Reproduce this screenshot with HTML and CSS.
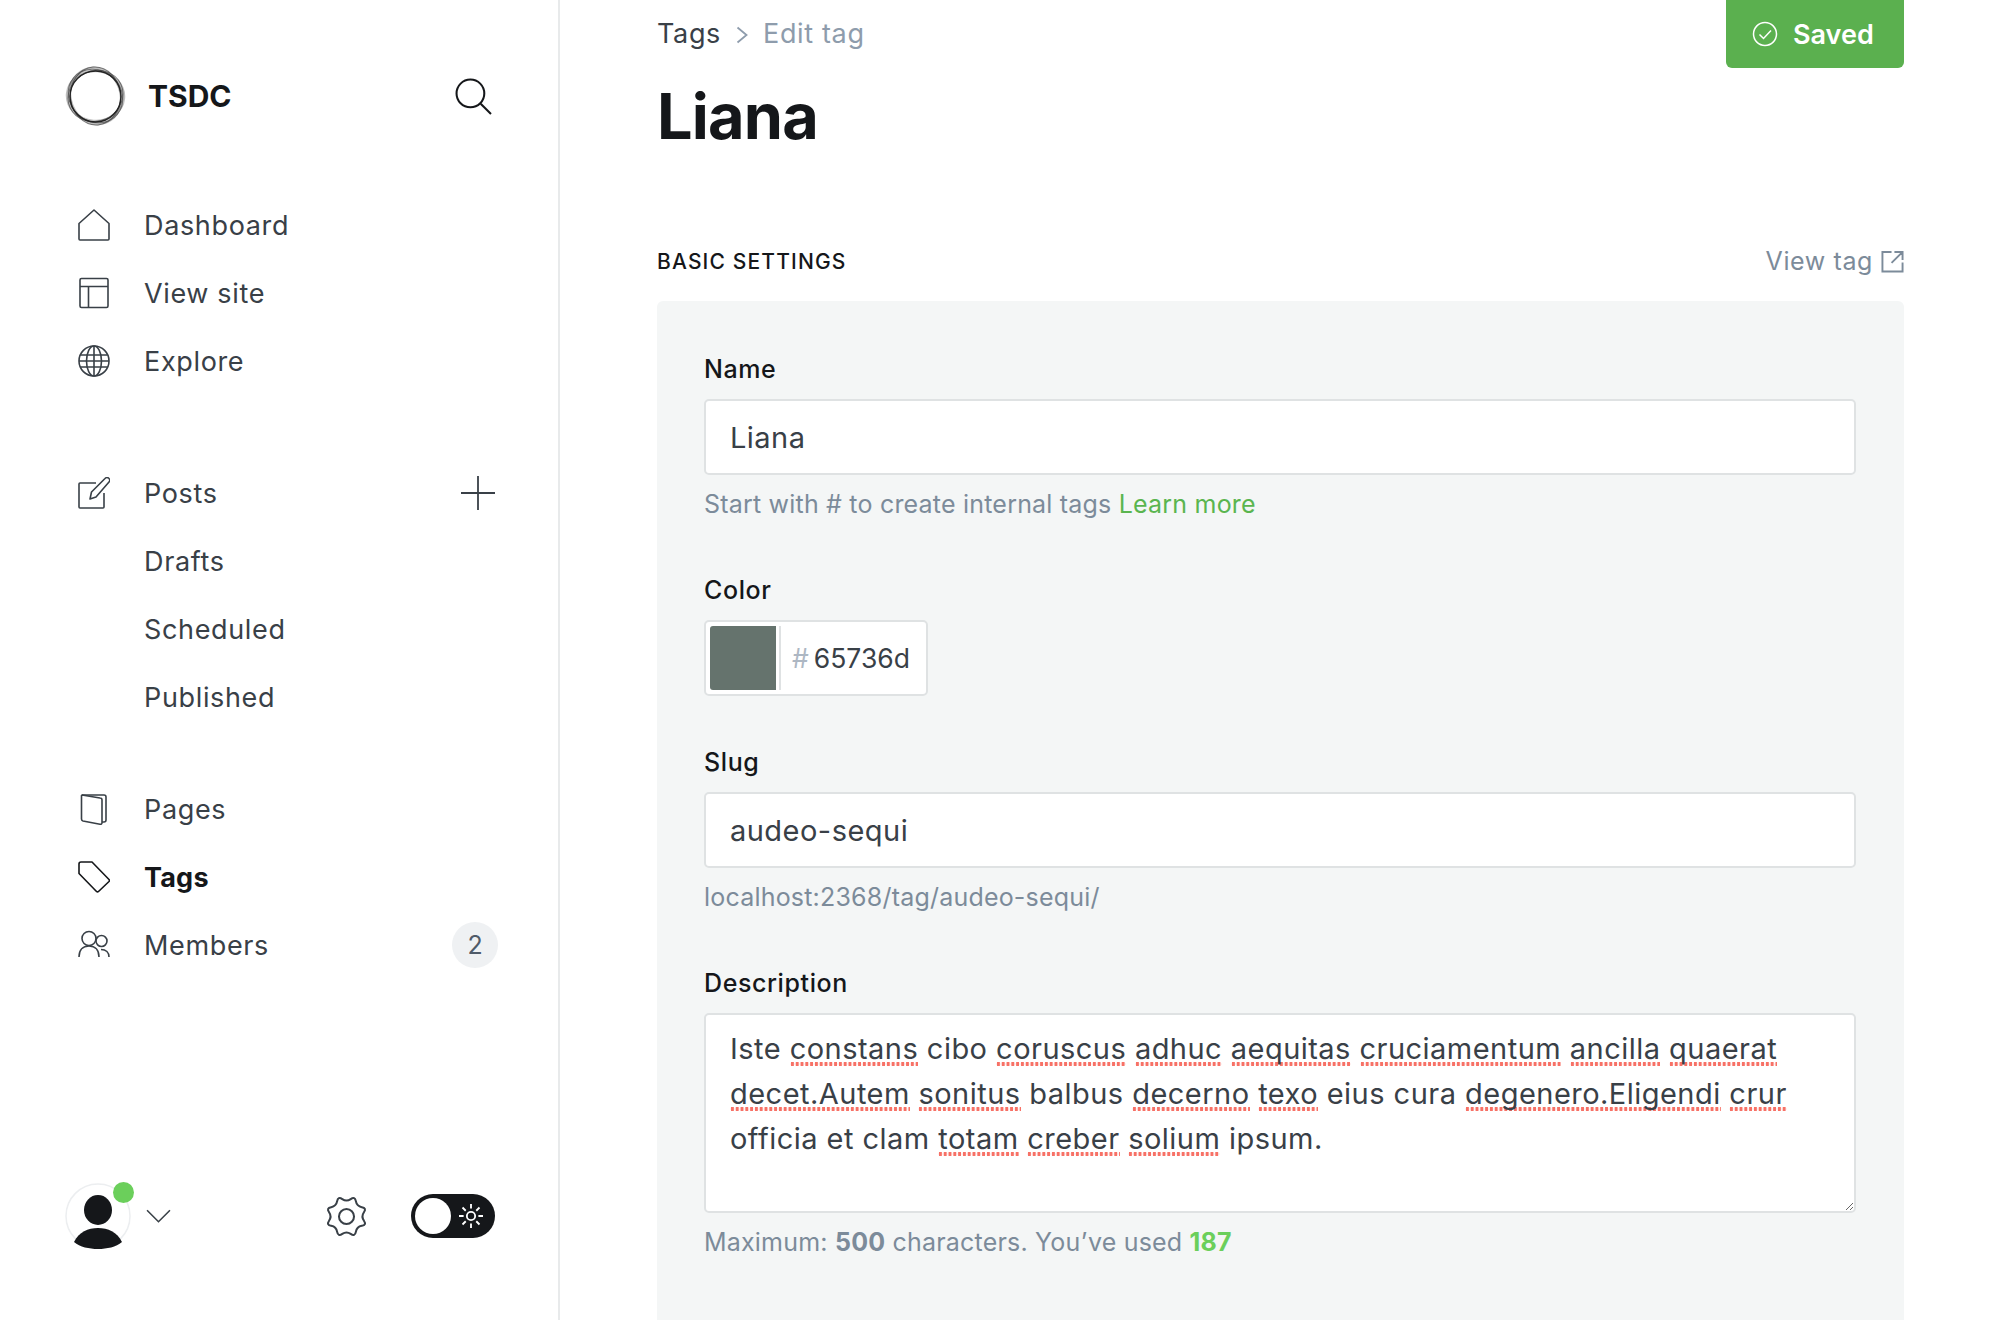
FILE: index.html
```html
<!DOCTYPE html>
<html lang="en">
<head>
  <meta charset="UTF-8">
  <title>Edit tag</title>
  <link rel="stylesheet" href="styles.css">
</head>
<body>
  <div class="app">
    <aside class="sidebar">
      <div class="brand">
        <svg class="logo" viewBox="0 0 60 60" fill="none">
          <ellipse cx="30" cy="30" rx="28.500" ry="25" transform="rotate(68 30 30)" stroke="#000" stroke-opacity=".25" stroke-width="2.500"/>
          <ellipse cx="30" cy="30" rx="28.500" ry="25" transform="rotate(5 30 30)" stroke="#000" stroke-opacity=".25" stroke-width="2.500"/>
          <ellipse cx="30" cy="30" rx="28.500" ry="25.500" transform="rotate(40 30 30)" stroke="#444" stroke-opacity=".7"/>
          <ellipse cx="30" cy="30" rx="29" ry="25" transform="rotate(85 30 30)" stroke="#444" stroke-opacity=".7"/>
          <ellipse cx="30" cy="30" rx="28" ry="25" transform="rotate(-25 30 30)" stroke="#444" stroke-opacity=".7"/>
          <circle cx="30" cy="30.500" r="25.500" stroke="#222" stroke-width="1.400"/>
        </svg>
        <span class="brand-name">TSDC</span>
        <svg class="search" viewBox="0 0 36 36" fill="none" stroke="#15171a" stroke-width="2">
          <circle cx="15" cy="15" r="13.500"/>
          <path d="M25 25l10 10"/>
        </svg>
      </div>

      <nav class="nav nav-first">
        <a class="nav-item">
          <svg class="nav-icon" viewBox="0 0 32 32"><path d="M1 14.500L16 1l15 13.500V30a1 1 0 0 1-1 1H2a1 1 0 0 1-1-1z"/></svg>
          Dashboard
        </a>
        <a class="nav-item">
          <svg class="nav-icon" viewBox="0 0 32 32"><rect x="2" y="1.500" width="28" height="29" rx="1.500"/><path d="M2 9.500h28M10.500 9.500v21"/></svg>
          View site
        </a>
        <a class="nav-item">
          <svg class="nav-icon" viewBox="0 0 32 32"><circle cx="16" cy="16" r="15"/><ellipse cx="16" cy="16" rx="7.500" ry="15"/><path d="M16 1v30M2.500 10h27M2.500 22h27M1 16h30"/></svg>
          Explore
        </a>
      </nav>

      <nav class="nav nav-posts">
        <a class="nav-item">
          <svg class="nav-icon" viewBox="0 0 32 32"><path d="M18 6H2a1 1 0 0 0-1 1v23a1 1 0 0 0 1 1h23a1 1 0 0 0 1-1V16"/><path d="M12 22l1.500-7L27 1.500a2.500 2.500 0 0 1 4 3.500L18 20z"/></svg>
          Posts
          <svg class="plus" viewBox="0 0 34 34"><path d="M17 0v34M0 17h34"/></svg>
        </a>
        <a class="nav-item nav-sub">Drafts</a>
        <a class="nav-item nav-sub">Scheduled</a>
        <a class="nav-item nav-sub">Published</a>
      </nav>

      <nav class="nav nav-last">
        <a class="nav-item">
          <svg class="nav-icon" viewBox="0 0 32 32"><path d="M4 2h22a2 2 0 0 1 2 2v23a2 2 0 0 1-2 2h-2"/><path d="M4 2l18 3a2 2 0 0 1 2 2v23a1.500 1.500 0 0 1-2 1.200L5 28a2 2 0 0 1-1.500-2V2.500z"/></svg>
          Pages
        </a>
        <a class="nav-item active">
          <svg class="nav-icon" viewBox="0 0 32 32"><path d="M1 3a2 2 0 0 1 2-2h11l17 17.500a1.500 1.500 0 0 1 0 2L20.500 30.500a1.500 1.500 0 0 1-2 0L1 12.500z"/></svg>
          Tags
        </a>
        <a class="nav-item">
          <svg class="nav-icon" viewBox="0 0 32 32"><circle cx="11" cy="9.500" r="7"/><path d="M1 28c0-7 4-11 10-11s10 4 10 11"/><circle cx="23.500" cy="12" r="5.500"/><path d="M23 20.500c5 0 8 3 8 7.500"/></svg>
          Members
          <span class="badge">2</span>
        </a>
      </nav>

      <div class="sidebar-foot">
        <div class="avatar">
          <svg viewBox="0 0 66 66">
            <circle cx="33" cy="33" r="32" fill="#fff" stroke="#eceef0" stroke-width="1.500"/>
            <ellipse cx="33" cy="27" rx="14" ry="15" fill="#15171a"/>
            <path d="M9 59c5-10 14-14 24-14s19 4 24 14c-6 5-15 7-24 7S15 64 9 59z" fill="#15171a"/>
          </svg>
          <span class="online-dot"></span>
        </div>
        <svg class="chevron" viewBox="0 0 24 13" fill="none" stroke="#394047" stroke-width="1.500"><path d="M1 1l11 11L23 1"/></svg>
        <svg class="gear" viewBox="-20 -20 40 40" fill="none" stroke="#394047" stroke-width="1.900">
          <path d="M3.920 -16.220Q7.850 -18.940 8.700 -14.250Q9.550 -9.550 14.250 -8.700Q18.940 -7.850 16.220 -3.920Q13.500 0 16.220 3.920Q18.940 7.850 14.250 8.700Q9.550 9.550 8.700 14.250Q7.850 18.940 3.920 16.220Q0 13.500 -3.920 16.220Q-7.850 18.940 -8.700 14.250Q-9.550 9.550 -14.250 8.700Q-18.940 7.850 -16.220 3.920Q-13.500 0 -16.220 -3.920Q-18.940 -7.850 -14.250 -8.700Q-9.550 -9.550 -8.700 -14.250Q-7.850 -18.940 -3.920 -16.220Q0 -13.500 3.920 -16.220z"/>
          <circle r="7"/>
        </svg>
        <div class="toggle">
          <span class="toggle-knob"></span>
          <svg class="sun" viewBox="0 0 26 26" fill="none" stroke="#fff" stroke-width="2">
            <circle cx="13" cy="13" r="4.500"/>
            <path d="M13 0v5M13 21v5M0 13h5M21 13h5M3.800 3.800l3.500 3.500M18.700 18.700l3.500 3.500M3.800 22.200l3.500-3.500M18.700 7.300l3.500-3.500"/>
          </svg>
        </div>
      </div>
    </aside>

    <main class="main">
      <header class="page-head">
        <div>
          <div class="crumbs">
            <a>Tags</a>
            <svg class="crumb-sep" viewBox="0 0 12 18" fill="none" stroke="#8e9cac" stroke-width="1.800"><path d="M1.500 1.500l9 7.500-9 7.500"/></svg>
            <span>Edit tag</span>
          </div>
          <h1>Liana</h1>
        </div>
        <button class="save-btn">
          <svg viewBox="0 0 26 26" fill="none" stroke="#fff" stroke-width="1.500"><circle cx="13" cy="13" r="11.500"/><path d="M7.500 13.500l4 4 7.500-8"/></svg>
          Saved
        </button>
      </header>

      <div class="section-head">
        <h2>BASIC SETTINGS</h2>
        <a class="view-tag">View tag
          <svg viewBox="0 0 24 24" fill="none" stroke="#7c8b9a" stroke-width="2"><path d="M11 2H1.500v20.500h21V13M14 2h8.500v8.500M22 2.500L11 13.500"/></svg>
        </a>
      </div>

      <section class="panel">
        <div class="field">
          <label>Name</label>
          <input class="input" type="text" value="Liana" spellcheck="false">
          <p class="help">Start with # to create internal tags <a class="green">Learn more</a></p>
        </div>

        <div class="field field-color">
          <label>Color</label>
          <div class="color-input">
            <span class="swatch"></span>
            <span class="hash">#</span>
            <span class="hex">65736d</span>
          </div>
        </div>

        <div class="field">
          <label>Slug</label>
          <input class="input" type="text" value="audeo-sequi" spellcheck="false">
          <p class="help">localhost:2368/tag/audeo-sequi/</p>
        </div>

        <div class="field">
          <label>Description</label>
          <div class="textarea">Iste <span class="typo">constans</span> cibo <span class="typo">coruscus</span> <span class="typo">adhuc</span> <span class="typo">aequitas</span> <span class="typo">cruciamentum</span> <span class="typo">ancilla</span> <span class="typo">quaerat</span> <span class="typo">decet.Autem</span> <span class="typo">sonitus</span> balbus <span class="typo">decerno</span> <span class="typo">texo</span> eius cura <span class="typo">degenero.Eligendi</span> <span class="typo">crur</span> officia et clam <span class="typo">totam</span> <span class="typo">creber</span> <span class="typo">solium</span> ipsum.</div>
          <p class="help">Maximum: <b>500</b> characters. You’ve used <b class="green">187</b></p>
        </div>
      </section>
    </main>
  </div>
</body>
</html>
```

FILE: styles.css
```css
* { box-sizing: border-box; }
html, body { margin: 0; height: 100%; overflow: hidden; }
body { font-family: Inter, "Noto Sans", sans-serif; color: #394047; background: #fff; }

.app { display: grid; grid-template-columns: 560px 1fr; height: 1320px; }

/* sidebar */
.sidebar { display: flex; flex-direction: column; border-right: 2px solid #e8eaeb; padding: 0 62px 0 65px; height: 1320px; }
.brand { display: flex; align-items: center; height: 60px; margin-top: 66px; }
.logo { width: 61px; height: 60px; }
.brand-name { font-size: 30px; font-weight: 700; color: #15171a; margin-left: 22px; }
.search { width: 37px; height: 37px; margin-left: auto; margin-right: 4px; }

.nav { display: flex; flex-direction: column; padding: 0 1px 0 13px; }
.nav-first { margin-top: 65px; }
.nav-posts { margin-top: 64px; }
.nav-last { margin-top: 44px; }
.nav-item { display: flex; align-items: center; height: 68px; font-size: 27px; letter-spacing: .65px; color: #394047; }
.nav-icon { width: 32px; height: 32px; margin-right: 34px; fill: none; stroke: #394047; stroke-width: 1.600; stroke-linejoin: round; }
.nav-sub { padding-left: 66px; }
.nav-item.active { font-weight: 700; color: #15171a; letter-spacing: .2px; }
.nav-item.active .nav-icon { stroke: #15171a; }
.plus { width: 34px; height: 34px; margin-left: auto; fill: none; stroke: #394047; stroke-width: 1.800; }
.badge { display: flex; align-items: center; justify-content: center; width: 46px; height: 46px; margin-left: auto; margin-right: -3px; border-radius: 50%; background: #eff1f3; font-size: 25px; letter-spacing: 0; color: #4f5b69; }

.sidebar-foot { display: flex; align-items: center; margin-top: auto; margin-bottom: 71px; height: 66px; }
.avatar { position: relative; width: 66px; height: 66px; }
.avatar svg { display: block; width: 66px; height: 66px; }
.online-dot { position: absolute; top: -1px; right: -3px; width: 21px; height: 21px; border-radius: 50%; background: #6bcf5b; }
.chevron { width: 25px; height: 14px; margin-left: 15px; }
.gear { width: 43px; height: 43px; margin-left: auto; }
.toggle { display: flex; align-items: center; justify-content: space-between; width: 84px; height: 44px; margin-left: 43px; margin-right: 1px; padding: 0 12px 0 4px; border-radius: 22px; background: #15171a; }
.toggle-knob { width: 36px; height: 36px; border-radius: 50%; background: #fff; }
.sun { width: 24px; height: 24px; }

/* main */
.main { padding: 0 96px 0 97px; min-width: 0; height: 1320px; overflow: hidden; }
.page-head { display: flex; justify-content: space-between; align-items: flex-start; }
.crumbs { display: flex; align-items: center; height: 67px; font-size: 27px; letter-spacing: .65px; color: #8e9cac; }
.crumbs a { color: #394047; }
.crumb-sep { width: 12px; height: 18px; margin: 2px 15px 0 15px; }
h1 { margin: 9px 0 0; font-size: 63px; line-height: 80px; font-weight: 700; letter-spacing: -.8px; color: #15171a; }
.save-btn { display: flex; align-items: center; gap: 15px; width: 178px; height: 68px; padding: 0 0 0 26px; border: 0; border-radius: 0 0 6px 6px; background: #5bb04f; color: #fff; font-family: inherit; font-size: 27px; font-weight: 600; }
.save-btn svg { width: 26px; height: 26px; }

.section-head { display: flex; justify-content: space-between; align-items: center; margin-top: 90px; height: 30px; }
h2 { margin: 0; font-size: 21px; font-weight: 500; letter-spacing: 1.15px; color: #15171a; }
.view-tag { display: flex; align-items: center; gap: 8px; font-size: 25px; letter-spacing: .6px; color: #7c8b9a; }
.view-tag svg { width: 23px; height: 23px; }

.panel { margin-top: 25px; padding: 53px 48px 0 47px; height: 1100px; border-radius: 6px 6px 0 0; background: #f4f6f6; }
.field { margin-bottom: 56px; }
.field-color { margin-bottom: 51px; }
label { display: block; font-size: 25px; line-height: 30px; font-weight: 500; letter-spacing: .6px; color: #15171a; margin-bottom: 15px; }
.input { display: block; width: 100%; height: 76px; padding: 0 24px; border: 2px solid #dfe2e3; border-radius: 5px; background: #fff; font-family: inherit; font-size: 29px; letter-spacing: .47px; color: #394047; }
.help { margin: 14px 0 0; font-size: 25px; line-height: 30px; letter-spacing: .2px; color: #7c8b9a; }
.help b { font-weight: 700; }
.green { color: #5ab54f; }
b.green { color: #6bcf5b; }

.color-input { display: flex; align-items: center; width: 224px; height: 76px; border: 2px solid #dfe2e3; border-radius: 5px; background: #fff; font-size: 26.500px; }
.swatch { width: 66px; height: 64px; margin-left: 4px; border-radius: 3px 0 0 3px; background: #65736d; border-right: 0; box-shadow: 3px 0 0 #fff, 5px 0 0 #dfe2e3; }
.hash { margin-left: 16px; color: #adb7c3; }
.hex { margin-left: 5px; color: #394047; }

.textarea { height: 200px; padding: 11px 24px; border: 2px solid #dfe2e3; border-radius: 5px; background: #fff; font-size: 29px; line-height: 45px; letter-spacing: .47px; color: #394047; overflow: auto; resize: vertical; }
.typo { background-image: radial-gradient(circle at 2.400px 2px, #f77166 1.800px, transparent 2px); background-size: 4.800px 4px; background-repeat: repeat-x; background-position: 0 100%; }
```
